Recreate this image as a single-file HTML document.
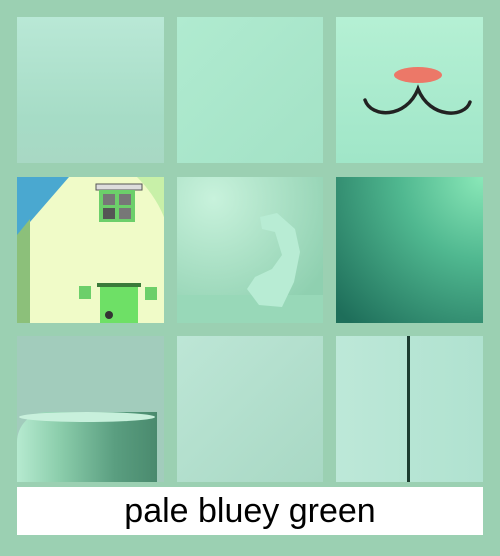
<!DOCTYPE html>
<html><head><style>
body{margin:0;width:500px;height:556px;background:#9bd0b2;position:relative;overflow:hidden;font-family:"Liberation Sans",sans-serif}
.t{position:absolute;width:147px;height:146px;overflow:hidden}
</style></head><body>
<div class="t" style="left:17px;top:17px;background:linear-gradient(180deg,#b9e8d6,#a6dcc6 70%,#a8d8c4)"></div>
<div class="t" style="left:177px;top:17px;width:146px;background:linear-gradient(135deg,#b0ebd0,#a3e2c6)"></div>
<div class="t" style="left:336px;top:17px;background:linear-gradient(180deg,#b5f0d4,#a0e6c8)">
<svg width="147" height="146"><ellipse cx="82" cy="58" rx="24" ry="8" fill="#ec7868"/>
<path d="M29 83 C35 101 70 102 82 72 C94 102 129 101 134 85" stroke="#222" stroke-width="3.5" fill="none" stroke-linecap="round"/></svg></div>
<div class="t" style="left:17px;top:177px;background:#f0fbc8">
<svg width="147" height="146"><path d="M0 0 H52 L0 60Z" fill="#4aa8d0"/><path d="M0 58 L13 42 V146 H0Z" fill="#8cc07a"/>
<path d="M120 0 C140 20 147 40 147 40 V0Z" fill="#c8f0a8"/>
<rect x="79" y="7" width="46" height="6" fill="#ddd" stroke="#555"/>
<rect x="82" y="13" width="36" height="32" fill="#6ccf6a"/>
<rect x="86" y="17" width="12" height="11" fill="#777"/><rect x="102" y="17" width="12" height="11" fill="#777"/>
<rect x="86" y="31" width="12" height="11" fill="#555"/><rect x="102" y="31" width="12" height="11" fill="#777"/>
<rect x="80" y="106" width="44" height="4" fill="#3a7a3a"/><rect x="83" y="110" width="38" height="36" fill="#6ee066"/>
<circle cx="92" cy="138" r="4" fill="#333"/>
<rect x="62" y="109" width="12" height="13" fill="#6ccf6a"/><rect x="128" y="110" width="12" height="13" fill="#6ccf6a"/></svg></div>
<div class="t" style="left:177px;top:177px;width:146px;background:radial-gradient(circle at 25% 15%,#c8f2dc,#8fd0b0 80%)">
<div style="position:absolute;left:0;right:0;top:118px;bottom:0;background:#98d8b8"></div>
<svg width="146" height="146" style="position:absolute;left:0;top:0"><path d="M83 40 L100 36 L118 52 L123 75 L117 105 L105 130 L82 128 L70 112 L78 100 L95 92 L105 78 L98 55 L85 52Z" fill="#b8ecd4"/></svg></div>
<div class="t" style="left:336px;top:177px;background:radial-gradient(circle at 100% 0%,#8ae8b8,#50b890 40%,#1e6e5a 95%)"></div>
<div class="t" style="left:17px;top:336px;background:#a2ccbc">
<div style="position:absolute;left:0;top:76px;width:140px;height:80px;background:linear-gradient(90deg,#b6ead0,#8cceac 30%,#5a9e80 70%,#4a8a6e);border-radius:30px 0 0 0"></div>
<div style="position:absolute;left:2px;top:76px;width:136px;height:10px;border-radius:50%;background:#c8f0dc"></div></div>
<div class="t" style="left:177px;top:336px;width:146px;background:linear-gradient(135deg,#bde6d6,#a8d8c4)"></div>
<div class="t" style="left:336px;top:336px;background:linear-gradient(90deg,#bde8d8,#b0e2d0)">
<div style="position:absolute;left:71px;top:0;width:3px;height:146px;background:#1c3c30"></div></div>
<div style="position:absolute;left:17px;top:487px;width:466px;height:48px;background:#fff;text-align:center;font-size:34px;line-height:48px;color:#000">pale bluey green</div>
</body></html>
